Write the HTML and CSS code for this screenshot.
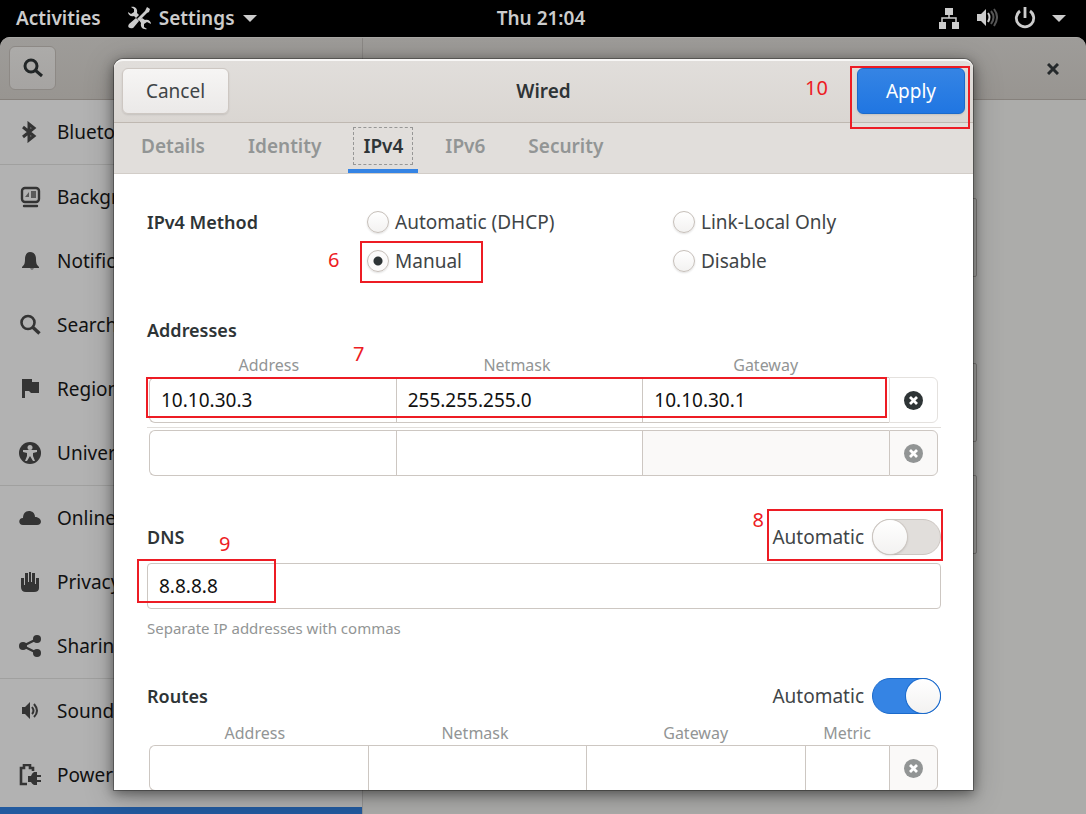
FILE: index.html
```html
<!DOCTYPE html>
<html lang="en">
<head>
<meta charset="utf-8">
<meta name="viewport" content="width=device-width, initial-scale=1">
<title>Settings - Wired</title>
<link rel="stylesheet" href="styles.css">
</head>
<body>
<header class="topbar">
  <div class="topbar-left">
    <button class="top-btn" type="button">Activities</button>
    <button class="top-btn app-menu" type="button">
      <svg width="24" height="24" viewBox="0 0 24 24" fill="currentColor" aria-hidden="true">
        <path d="M1 6 4 8 7 6 7 3 4 1C8 0 11 3 10 7L12 9 9 12 7 10C4 11 1 9 1 6z"/>
        <path d="m12 14 3-2 3 2c3-1 6 1 6 4l-4-2-3 2v3l3 2c-4 1-7-2-6-6z"/>
        <path d="m20 1 3 2-1 3-2 1-8 8-2-2 8-8z"/>
        <path d="M9 12 2 18q-2 3 1 4t4-1l5-6z"/>
      </svg>
      <span>Settings</span>
      <svg width="14" height="8" viewBox="0 0 14 8" aria-hidden="true"><path d="M0 1h14L7 8z" fill="currentColor"/></svg>
    </button>
  </div>
  <time class="clock">Thu 21:04</time>
  <button class="top-btn status" type="button" aria-label="System menu">
    <svg width="22" height="22" viewBox="0 0 22 22" aria-hidden="true"><path d="M7 1h8v7H7zM1 15h7v7H1zM14 15h7v7h-7z" fill="currentColor"/><path d="M11 8v3M4 15v-4h14v4" fill="none" stroke="currentColor" stroke-width="1.5"/></svg>
    <svg width="22" height="22" viewBox="0 0 22 22" aria-hidden="true"><path d="M1 7h4l5-5v17l-5-5H1z" fill="currentColor"/><path d="M12 6q3 4 0 9" fill="none" stroke="currentColor" stroke-width="2"/><path d="M15 4q5 6 0 13M18 2q6 8 0 17" fill="none" stroke="#555" stroke-width="2"/></svg>
    <svg width="22" height="22" viewBox="0 0 22 22" fill="none" stroke="currentColor" stroke-width="2.800" aria-hidden="true"><path d="M6 4a8.700 8.700 0 1 0 10 0M11 0v11"/></svg>
    <svg width="14" height="8" viewBox="0 0 14 8" aria-hidden="true"><path d="M0 1h14L7 8z" fill="currentColor"/></svg>
  </button>
</header>

<div class="window">
  <div class="window-head">
    <div class="head-side">
      <button class="search-btn" type="button" aria-label="Search">
        <svg width="22" height="22" viewBox="0 0 22 22" fill="none" stroke="currentColor" stroke-width="3" aria-hidden="true"><circle cx="9" cy="9" r="6"/><path d="m13 13 7 6"/></svg>
      </button>
    </div>
    <div class="head-main">
      <button class="close-btn" type="button" aria-label="Close">
        <svg width="12" height="12" viewBox="0 0 12 12" stroke="currentColor" stroke-width="3" aria-hidden="true"><path d="m1 1 10 10M11 1 1 11"/></svg>
      </button>
    </div>
  </div>
  <div class="window-body">
    <nav class="sidebar">
      <a class="row" href="#bluetooth"><svg width="22" height="22" viewBox="0 0 22 22" fill="none" stroke="currentColor" stroke-width="3" aria-hidden="true"><path d="m4 6 11 9-5 4V3l5 4-11 9"/></svg>Bluetooth</a>
      <a class="row group" href="#background"><svg width="22" height="22" viewBox="0 0 22 22" fill="none" stroke="currentColor" aria-hidden="true"><rect x="3" y="2" width="17" height="14" rx="3" stroke-width="2.4"/><path d="M6 11h4V6zM12 5h5v7h-5z" fill="currentColor" stroke="none" opacity=".7"/><path d="M5 20h13" stroke-width="2.4" stroke-linecap="round"/></svg>Background</a>
      <a class="row" href="#notifications"><svg width="22" height="22" viewBox="0 0 22 22" fill="currentColor" aria-hidden="true"><path d="M11 2c4 0 6 3 6 7 0 5 1 6 3 8v1H3v-1c2-2 3-3 3-8 0-4 2-7 5-7zM11 18.500h4q-2 2-4 0z"/></svg>Notifications</a>
      <a class="row" href="#search"><svg width="22" height="22" viewBox="0 0 22 22" fill="none" stroke="currentColor" stroke-width="2.600" aria-hidden="true"><circle cx="9" cy="8.500" r="6.500"/><path d="m13.500 13 7 6.500" stroke-width="3.400"/></svg>Search</a>
      <a class="row" href="#region"><svg width="22" height="22" viewBox="0 0 22 22" fill="currentColor" aria-hidden="true"><path d="M3 1h10v3h7v11h-8l-2-2H6v7H3z"/></svg>Region &amp; Language</a>
      <a class="row" href="#universal"><svg width="22" height="22" viewBox="0 0 22 22" aria-hidden="true"><circle cx="11" cy="11" r="11" fill="currentColor"/><circle cx="11" cy="5.500" r="2.500" fill="#b2b2b2"/><path d="M4 8h14v2l-4 1v3l2 5h-2l-3-5-3 5H6l2-5v-3l-4-1z" fill="#b2b2b2"/></svg>Universal Access</a>
      <a class="row group" href="#online"><svg width="22" height="22" viewBox="0 0 22 22" fill="currentColor" aria-hidden="true"><path d="M4 18c-5 0-5-7 0-7 0-4 2-7 6-7 3 0 6 2 6 6 7 0 8 8 2 8z"/></svg>Online Accounts</a>
      <a class="row" href="#privacy"><svg width="22" height="22" viewBox="0 0 22 22" fill="currentColor" aria-hidden="true"><path d="M2 7h3v7h1V2h3v9h1V1h2v10h1V2h3v11h1V7h3v10q0 4-5 4H7q-5 0-5-5z"/></svg>Privacy</a>
      <a class="row" href="#sharing"><svg width="22" height="22" viewBox="0 0 22 22" fill="currentColor" aria-hidden="true"><path d="m18 4-14 7 14 7" fill="none" stroke="currentColor" stroke-width="2.400"/><circle cx="4" cy="11" r="4"/><circle cx="18" cy="4" r="4"/><circle cx="18" cy="18" r="4"/></svg>Sharing</a>
      <a class="row group" href="#sound"><svg width="22" height="22" viewBox="0 0 22 22" aria-hidden="true"><path d="M3 7h3l5-5v17l-5-5H3z" fill="currentColor"/><path d="M13 7q3 4 0 7M15 4q6 7 0 13" fill="none" stroke="currentColor" stroke-width="2"/></svg>Sound</a>
      <a class="row" href="#power"><svg width="22" height="22" viewBox="0 0 22 22" aria-hidden="true"><path d="M8 20H2V4h3V1h6v3h3v3" fill="none" stroke="currentColor" stroke-width="2.600"/><path d="M18 8v3h4v2h-4v3h4v2h-4v3h-3q-2-1-3-3H9v-6h3q1-3 3-4z" fill="currentColor"/></svg>Power</a>
      <div class="selected"></div>
    </nav>
    <main class="panel" aria-hidden="true">
      <div class="card"></div>
      <div class="card second"></div>
      <div class="card third"></div>
    </main>
  </div>

  <form class="dialog" role="dialog" aria-labelledby="dialog-title">
    <header class="dialog-head">
      <button class="btn" type="button">Cancel</button>
      <h1 class="title" id="dialog-title">Wired</h1>
      <div class="apply-wrap marked">
        <button class="btn primary" type="button">Apply</button>
        <span class="mark mark-apply"></span><span class="num num-apply">10</span>
      </div>
    </header>
    <div class="tabs" role="tablist">
      <button class="tab" type="button" role="tab">Details</button>
      <button class="tab" type="button" role="tab">Identity</button>
      <button class="tab active" type="button" role="tab" aria-selected="true"><span class="focus">IPv4</span></button>
      <button class="tab" type="button" role="tab">IPv6</button>
      <button class="tab" type="button" role="tab">Security</button>
    </div>

    <div class="content">
      <div class="methods" role="radiogroup" aria-labelledby="method">
        <h2 class="heading" id="method">IPv4 Method</h2>
        <div class="option"><label class="choice"><input class="radio" type="radio" name="method">Automatic (DHCP)</label></div>
        <div class="option"><label class="choice"><input class="radio" type="radio" name="method">Link-Local Only</label></div>
        <div class="option manual"><label class="choice marked"><input class="radio" type="radio" name="method" checked>Manual<span class="mark mark-manual"></span><span class="num num-manual">6</span></label></div>
        <div class="option"><label class="choice"><input class="radio" type="radio" name="method">Disable</label></div>
      </div>

      <section class="addresses">
        <h2 class="heading">Addresses</h2>
        <div class="marked">
          <table class="grid">
            <colgroup><col class="c-wide"><col class="c-wide"><col class="c-wide"><col class="c-del"></colgroup>
            <thead><tr><th>Address</th><th>Netmask</th><th>Gateway</th><td></td></tr></thead>
            <tbody>
              <tr>
                <td><input class="cell" aria-label="Address 1" value="10.10.30.3"></td>
                <td><input class="cell" aria-label="Netmask 1" value="255.255.255.0"></td>
                <td><input class="cell" aria-label="Gateway 1" value="10.10.30.1"></td>
                <td><button class="cell del live" type="button" aria-label="Delete address 1"><svg width="19" height="19" viewBox="0 0 19 19" aria-hidden="true"><circle cx="9.500" cy="9.500" r="9.500" fill="currentColor"/><path d="m6 6 7 7M13 6l-7 7" stroke="#fff" stroke-width="2.800"/></svg></button></td>
              </tr>
              <tr><td class="rule" colspan="4"><div class="line"></div></td></tr>
              <tr>
                <td><input class="cell" aria-label="Address 2"></td>
                <td><input class="cell" aria-label="Netmask 2"></td>
                <td><input class="cell" aria-label="Gateway 2" disabled></td>
                <td><button class="cell del" type="button" aria-label="Delete address 2" disabled><svg width="19" height="19" viewBox="0 0 19 19" aria-hidden="true"><circle cx="9.500" cy="9.500" r="9.500" fill="currentColor"/><path d="m6 6 7 7M13 6l-7 7" stroke="#fff" stroke-width="2.800"/></svg></button></td>
              </tr>
            </tbody>
          </table>
          <span class="mark mark-addr"></span><span class="num num-addr">7</span>
        </div>
      </section>

      <section class="dns">
        <div class="section-head">
          <h2 class="heading" id="dns">DNS</h2>
          <label class="auto marked">Automatic<input class="switch" type="checkbox"><span class="mark mark-auto"></span><span class="num num-auto">8</span></label>
        </div>
        <div class="dns-field marked">
          <input class="entry" aria-labelledby="dns" value="8.8.8.8">
          <span class="mark mark-dns"></span><span class="num num-dns">9</span>
        </div>
        <p class="hint">Separate IP addresses with commas</p>
      </section>

      <section class="routes">
        <div class="section-head">
          <h2 class="heading">Routes</h2>
          <label class="auto">Automatic<input class="switch" type="checkbox" checked></label>
        </div>
        <table class="grid">
          <colgroup><col class="c-mid"><col class="c-mid"><col class="c-mid"><col class="c-metric"><col class="c-del"></colgroup>
          <thead><tr><th>Address</th><th>Netmask</th><th>Gateway</th><th>Metric</th><td></td></tr></thead>
          <tbody><tr>
            <td><input class="cell" aria-label="Route address"></td>
            <td><input class="cell" aria-label="Route netmask"></td>
            <td><input class="cell" aria-label="Route gateway"></td>
            <td><input class="cell" aria-label="Route metric"></td>
            <td><button class="cell del" type="button" aria-label="Delete route" disabled><svg width="19" height="19" viewBox="0 0 19 19" aria-hidden="true"><circle cx="9.500" cy="9.500" r="9.500" fill="currentColor"/><path d="m6 6 7 7M13 6l-7 7" stroke="#fff" stroke-width="2.800"/></svg></button></td>
          </tr></tbody>
        </table>
      </section>
    </div>
  </form>
</div>
</body>
</html>
```

FILE: styles.css
```css
* { box-sizing: border-box; }

body {
  margin: 0;
  height: 100vh;
  display: flex;
  flex-direction: column;
  overflow: hidden;
  background: #000;
  color: #3f4547;
  font: 19px/26px "Noto Sans", "Open Sans", sans-serif;
}

button, input { font: inherit; color: inherit; margin: 0; }
button { border: 0; background: none; padding: 0; }
svg { display: block; flex: none; }

/* Top bar */
.topbar {
  height: 37px;
  flex: none;
  display: grid;
  grid-template-columns: 1fr auto 1fr;
  align-items: center;
  padding: 0 20px 1px 16px;
  color: #ccc;
  font-size: 19px;
  font-weight: 600;
}
.topbar-left, .app-menu, .status { display: flex; align-items: center; }
.topbar-left { gap: 26px; }
.app-menu { gap: 8px; }
.status { justify-self: end; gap: 16px; }

/* Settings window */
.window {
  position: relative;
  flex: 1;
  min-height: 0;
  display: flex;
  flex-direction: column;
  overflow: hidden;
  border-radius: 10px 10px 0 0;
  background: #acacaa;
}
.window-head {
  height: 63px;
  flex: none;
  display: flex;
  background: linear-gradient(#9e9c99, #989591);
  border-top: 1px solid #a9a8a5;
  border-bottom: 1px solid #86817c;
}
.head-side {
  width: 363px;
  padding: 8px 9px;
  border-right: 1px solid #8b8885;
}
.search-btn {
  width: 47px;
  height: 44px;
  display: grid;
  place-items: center;
  border: 1px solid #8d8985;
  border-radius: 6px;
  background: linear-gradient(#acaba9, #a6a4a2);
  color: #222627;
}
.head-main {
  flex: 1;
  display: flex;
  justify-content: flex-end;
  align-items: center;
  padding-right: 27px;
}
.close-btn { color: #25292b; }
.window-body { flex: 1; min-height: 0; display: flex; }

.sidebar {
  width: 363px;
  flex: none;
  overflow: hidden;
  background: #b2b2b2;
  border-right: 1px solid #979695;
}
.row {
  height: 64px;
  display: flex;
  align-items: center;
  gap: 16px;
  padding-left: 19px;
  color: #111;
  text-decoration: none;
}
.row svg { color: #343434; }
.group { height: 65px; border-top: 1px solid #a0a09f; }
.selected { height: 64px; background: #225a9f; }

.panel { flex: 1; padding: 98px 109px 0 80px; }
.card { height: 79px; border: 1px solid #83807e; border-radius: 2px; }
.second { margin-top: 86px; }
.third { margin-top: 33px; }

/* Dialog */
.dialog {
  position: absolute;
  inset: 22px 113px 24px 114px;
  display: flex;
  flex-direction: column;
  border-radius: 9px 9px 0 0;
  background: #fff;
  box-shadow: 0 0 0 1px rgba(0, 0, 0, .3), 0 3px 12px 1px rgba(0, 0, 0, .4), 0 6px 30px rgba(0, 0, 0, .25);
}
.dialog-head {
  height: 64px;
  flex: none;
  display: grid;
  grid-template-columns: 1fr auto 1fr;
  align-items: center;
  padding: 0 8px 2px;
  border-top: 2px solid #f8f7f6;
  border-bottom: 1px solid #bfb8b1;
  border-radius: 9px 9px 0 0;
  background: linear-gradient(#e1dedb, #dad6d2);
}
.title { margin: 0; font-size: 19px; line-height: 26px; font-weight: 600; color: #2e3436; }
.btn {
  width: 107px;
  height: 46px;
  border: 1px solid #cdc7c2;
  border-radius: 6px;
  background: linear-gradient(#f6f5f4, #ebe9e8);
  box-shadow: 0 1px 2px rgba(0, 0, 0, .1);
}
.apply-wrap { justify-self: end; }
.primary {
  display: block;
  width: 108px;
  border-color: #1b6acb;
  background: linear-gradient(#3584e4, #2076e2);
  color: #fff;
}

.tabs {
  height: 51px;
  flex: none;
  display: flex;
  padding-left: 11px;
  gap: 11px;
  background: #e1dedb;
  border-bottom: 1px solid #d2cdc8;
}
.tab {
  height: 50px;
  padding: 0 16px;
  border-bottom: 4px solid transparent;
  font-size: 19px;
  font-weight: 600;
  color: #929595;
}
.active { padding: 0 5px; border-color: #3584e4; color: #2e3436; }
.focus {
  display: block;
  padding: 5px 9px;
  border: 1px dashed #979796;
}

.content {
  flex: 1;
  min-height: 0;
  overflow: hidden;
  padding: 28px 32px 0 33px;
}
.heading { margin: 0; font-size: 18px; line-height: 26px; font-weight: 600; color: #2e3436; }
.methods {
  display: grid;
  grid-template-columns: 220fr 306fr 268fr;
  grid-auto-rows: 39px;
  align-items: center;
}
.manual { grid-column: 2; }
.option { display: flex; }
.choice { display: flex; align-items: center; gap: 6px; }
.radio {
  appearance: none;
  width: 22px;
  height: 22px;
  border: 1px solid #c6bfb9;
  border-radius: 50%;
  background: linear-gradient(#fff, #f3f2f1);
  box-shadow: 0 1px 2px rgba(0, 0, 0, .12);
}
.radio:checked { background: radial-gradient(circle, #2e3436 4px, #fbfafa 5px); }

.addresses { margin-top: 37px; }
.addresses .heading { margin-bottom: 10px; }
.grid {
  width: calc(100% - 5px);
  margin: 0 3px 0 2px;
  table-layout: fixed;
  border-spacing: 0;
}
.grid td { padding: 0; }
.grid th {
  height: 24px;
  padding: 0;
  font-size: 16px;
  line-height: 24px;
  font-weight: 400;
  color: #929595;
}
.grid th:first-child { padding-right: 7px; }
.grid th:nth-child(2) { padding-right: 4px; }
.c-del { width: 49px; }
.c-metric { width: 84px; }
.cell {
  display: block;
  width: 100%;
  height: 46px;
  padding: 0 11px;
  border: 1px solid #cdc7c2;
  border-right-width: 0;
  background: #fff;
  color: #111;
}
.cell:disabled { background: #faf9f8; }
td:first-child > .cell { border-radius: 6px 0 0 6px; }
.del {
  display: grid;
  place-items: center;
  padding: 0;
  border-right-width: 1px;
  border-radius: 0 6px 6px 0;
  color: #929595;
}
.live { border-color: #e4e1de; color: #2e3436; }
.rule { height: 7px; }
.line { height: 1px; margin: 1px -3px 0 -2px; background: #e1dedb; }

.dns { margin-top: 43px; }
.section-head { display: flex; align-items: center; justify-content: space-between; }
.auto { display: flex; align-items: center; gap: 8px; }
.switch {
  appearance: none;
  width: 69px;
  height: 36px;
  display: flex;
  border: 1px solid #cdc7c2;
  border-radius: 18px;
  background: #e1dedb;
}
.switch::before {
  content: "";
  width: 34px;
  height: 34px;
  border-radius: 50%;
  background: linear-gradient(#fff, #f3f2f1);
  box-shadow: 0 0 0 1px #cdc7c2, 0 1px 3px rgba(0, 0, 0, .2);
}
.switch:checked { justify-content: flex-end; background: #3584e4; border-color: #1b6acb; }
.switch:checked::before { box-shadow: 0 0 0 1px #1b6acb; }
.dns-field { margin-top: 8px; }
.entry {
  display: block;
  width: 100%;
  height: 46px;
  padding: 0 11px;
  border: 1px solid #cdc7c2;
  border-radius: 4px;
  background: #fff;
  color: #111;
}
.hint { margin: 7px 0 38px; font-size: 15px; line-height: 24px; color: #929595; }
.routes .grid { margin-top: 7px; }

/* Numbered callouts drawn over the controls */
.marked { position: relative; }
.mark { position: absolute; border: 2px solid #ed1c24; pointer-events: none; }
.num { position: absolute; font-size: 20px; line-height: 24px; color: #ed1c24; }
.mark-apply { inset: -2px -5px -15px -7px; }
.num-apply { left: -52px; top: 8px; }
.mark-manual { inset: -7px -21px -9px -7px; }
.num-manual { left: -39px; top: 0; }
.mark-addr { inset: 24px 54px 58px -1px; }
.num-addr { left: 206px; top: -11px; }
.mark-auto { inset: -10px -2px -6px -5px; }
.num-auto { left: -20px; top: -11px; }
.mark-dns { left: -10px; top: -4px; width: 139px; height: 44px; }
.num-dns { left: 72px; top: -31px; }
```
